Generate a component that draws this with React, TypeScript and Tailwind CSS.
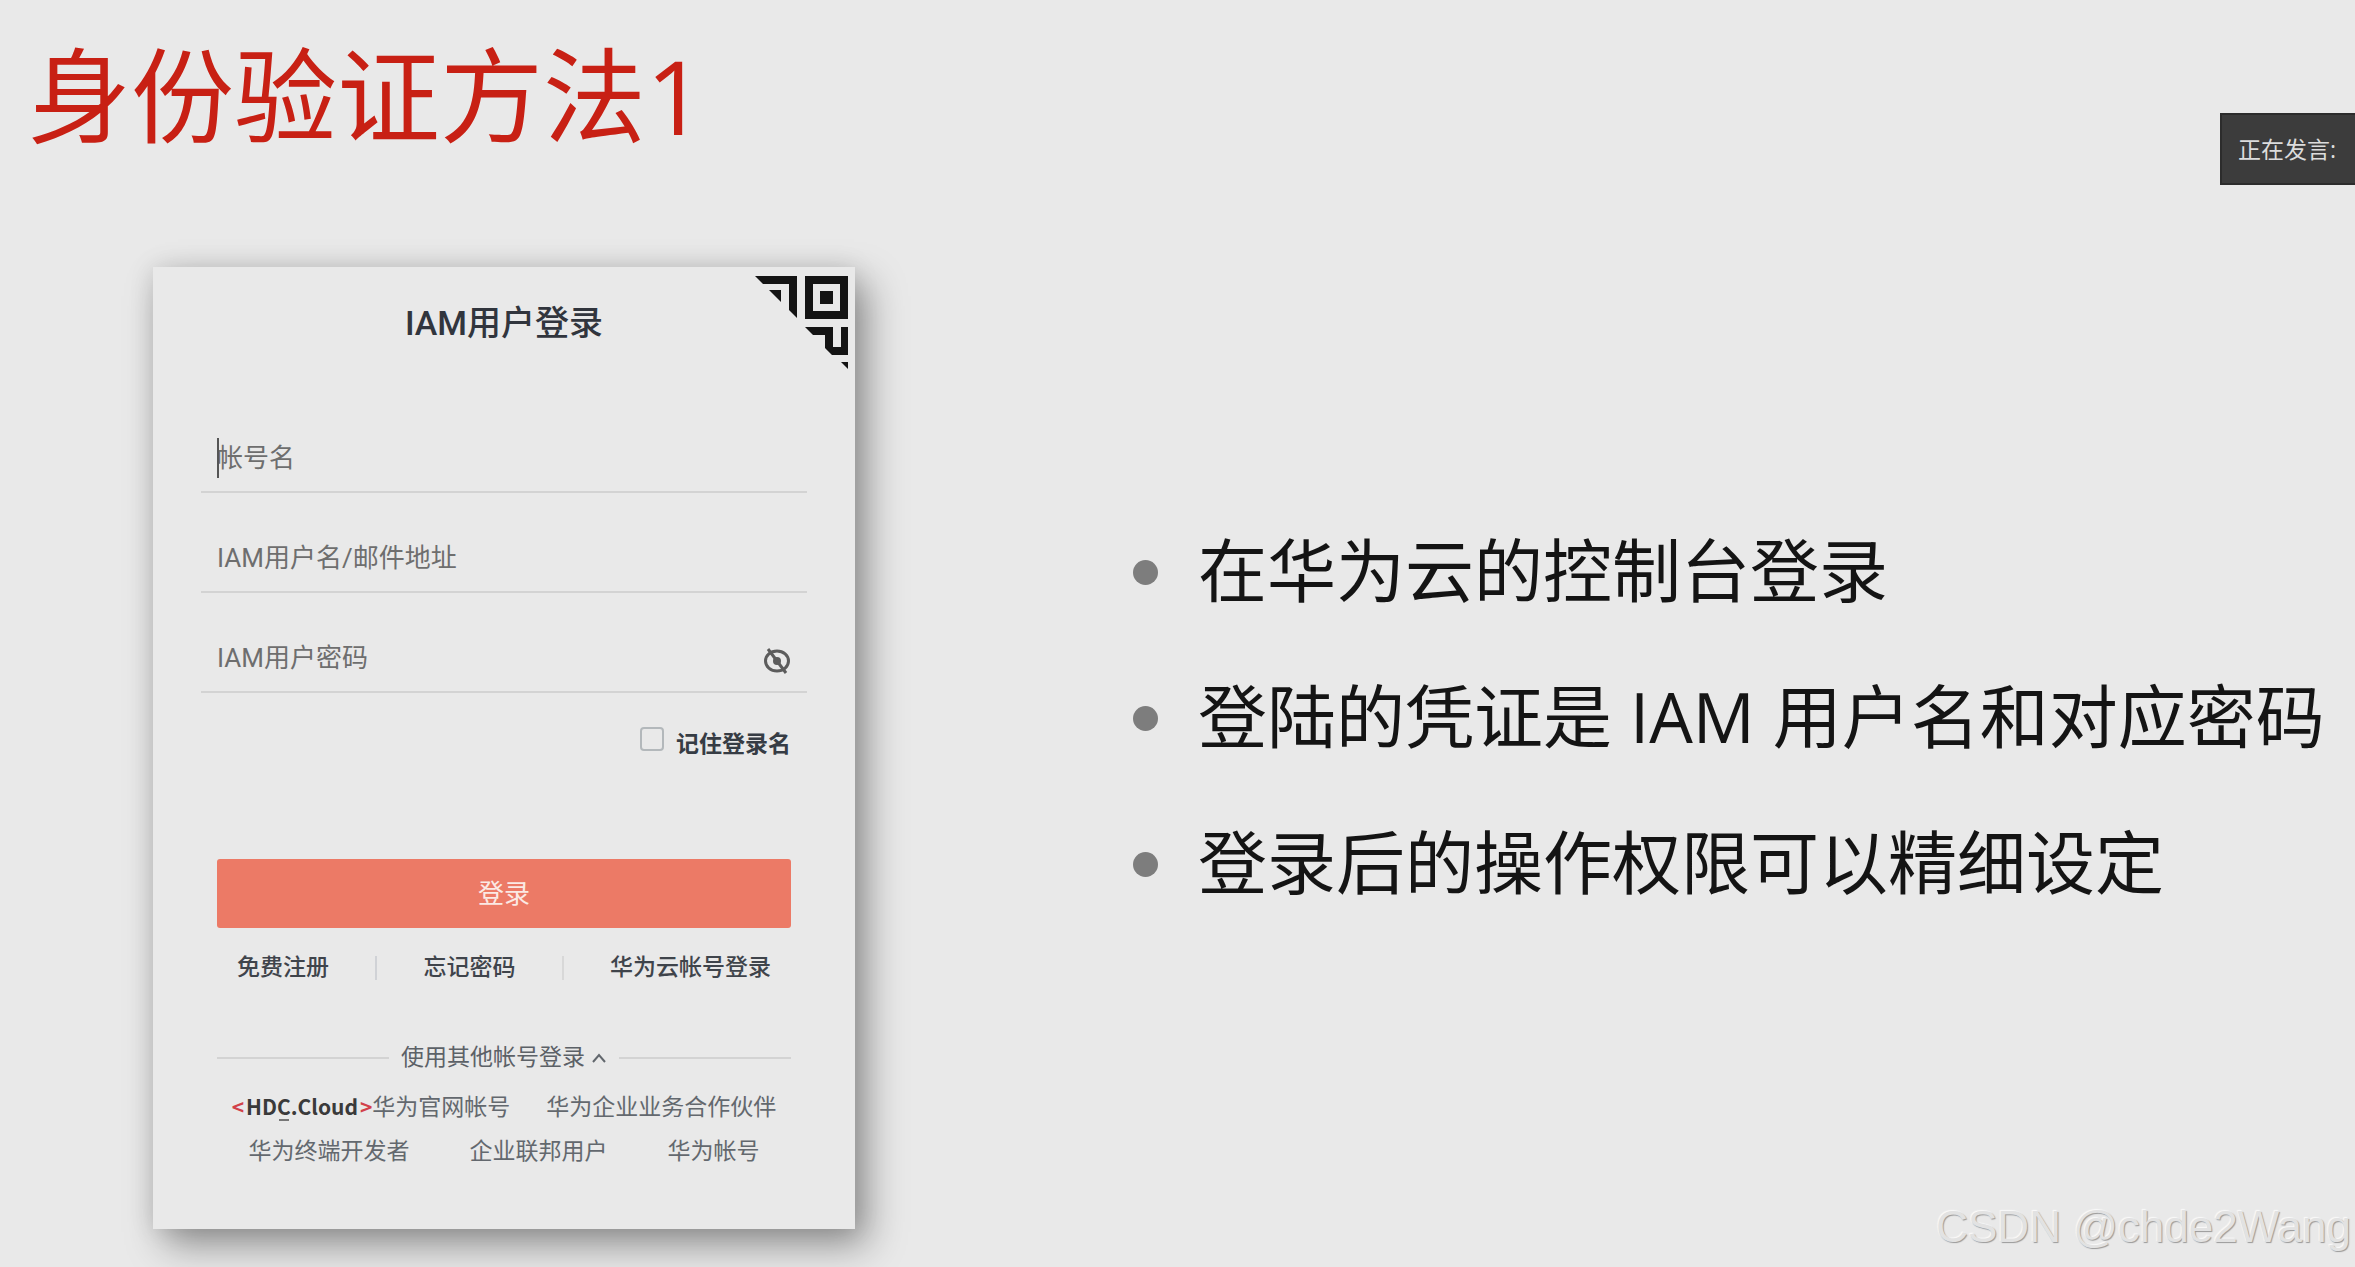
import { useEffect, useRef } from "react";

const points = [
  "在华为云的控制台登录",
  "登陆的凭证是 IAM 用户名和对应密码",
  "登录后的操作权限可以精细设定",
];

function QrCorner() {
  return (
    <svg
      viewBox="0 0 93 93"
      className="absolute top-[9px] right-[7px] h-[93px] w-[93px]"
      fill="#141414"
      aria-hidden="true"
    >
      <path d="M0 0H42V42L34 34V8H8Z" />
      <path d="M14 14H26V26Z" />
      <path fillRule="evenodd" d="M50 0H93V43H50ZM58 8V35H85V8Z" />
      <path d="M65 15H78V28H65Z" />
      <path d="M50 51H78V71H86V51H93V79H77L70 72V59H58Z" />
      <path d="M86 86H93V93Z" />
    </svg>
  );
}

function EyeOff() {
  return (
    <svg viewBox="0 0 28 28" className="h-7 w-7" fill="none" stroke="#5c5c5c" strokeWidth="3" aria-hidden="true">
      <ellipse cx="14" cy="14" rx="11.5" ry="10" />
      <circle cx="14" cy="14" r="4" fill="#5c5c5c" stroke="none" />
      <path d="M5 2L23 26" />
    </svg>
  );
}

function Field({
  label,
  type = "text",
  focused = false,
}: {
  label: string;
  type?: string;
  focused?: boolean;
}) {
  const ref = useRef<HTMLInputElement>(null);
  useEffect(() => {
    if (focused) ref.current?.focus({ preventScroll: true });
  }, [focused]);
  return (
    <div className="relative flex h-[100px] items-center border-b-2 border-[#d3d3d3] px-4 pt-8">
      {focused && <span className="absolute left-4 h-10 w-0.5 bg-[#555]" />}
      <input
        ref={ref}
        type={type}
        aria-label={label}
        placeholder={label}
        className="h-12 min-w-0 flex-1 bg-transparent text-[26px] leading-[48px] text-[#444] caret-transparent outline-none placeholder:text-[#6e6e6e]"
      />
      {type === "password" && (
        <button type="button" aria-label="显示密码" className="mt-1.5">
          <EyeOff />
        </button>
      )}
    </div>
  );
}

function LoginCard() {
  return (
    <form
      className="relative w-[702px] max-w-full bg-[#e9e9e9] px-12 pb-[57px] font-['Roboto','Noto_Sans_CJK_SC',sans-serif] shadow-[12px_16px_36px_0px_rgba(0,0,0,0.38),0px_0px_24px_0px_rgba(0,0,0,0.1)]"
      onSubmit={(e) => e.preventDefault()}
    >
      <QrCorner />
      <h2 className="pt-8 text-center text-[34px] leading-[48px] font-medium text-[#31353d]">IAM用户登录</h2>
      <div className="mt-[46px]">
        <Field label="帐号名" focused />
        <Field label="IAM用户名/邮件地址" />
        <Field label="IAM用户密码" type="password" />
      </div>
      <div className="px-4">
        <label className="mt-8 flex items-center justify-end gap-3 text-[23px] leading-10 font-bold text-[#363c44]">
          <input
            type="checkbox"
            className="mb-3 h-6 w-6 appearance-none rounded-sm border-2 border-[#b3b8bb]"
          />
          记住登录名
        </label>
        <button
          type="submit"
          className="mt-[94px] h-[69px] w-full rounded-[3px] bg-[#ec7a66] pt-0.5 text-[26px] text-[#fbe9e4]"
        >
          登录
        </button>
        <nav className="mt-5 flex items-center justify-between px-5 text-[23px] leading-10 font-medium text-[#3f444b]">
          <a href="#register">免费注册</a>
          <span className="h-6 w-0.5 bg-[#d0d2d6]" />
          <a href="#forgot">忘记密码</a>
          <span className="h-6 w-0.5 bg-[#d8d8d8]" />
          <a href="#account-login">华为云帐号登录</a>
        </nav>
        <div className="mt-[50px] flex items-center text-[23px] leading-10 text-[#5c6167]">
          <span className="h-0.5 flex-1 bg-[#d3d3d3]" />
          <button type="button" className="mx-3 flex items-center gap-1.5">
            使用其他帐号登录
            <svg viewBox="0 0 16 10" className="h-2.5 w-4" fill="none" stroke="#62676d" strokeWidth="2" aria-hidden="true">
              <path d="M2 9L8 2L14 9" />
            </svg>
          </button>
          <span className="h-0.5 flex-1 bg-[#d3d3d3]" />
        </div>
        <div className="mt-2.5 flex items-start justify-center text-[23px] leading-10 text-[#63686e]">
          <a
            href="#hdc"
            className="flex gap-0.5 font-['Noto_Sans_CJK_SC',sans-serif] text-[21px] leading-9 font-bold text-[#3a3a3a]"
          >
            <span className="text-[#d2414a]">&lt;</span>
            <span>
              HD
              <span className="relative">
                C<span className="absolute bottom-0 left-0.5 h-0.5 w-2.5 bg-[#777]" />
              </span>
              .Cloud
            </span>
            <span className="text-[#d2414a]">&gt;</span>
          </a>
          <a href="#official">华为官网帐号</a>
          <a href="#partner" className="ml-9">
            华为企业业务合作伙伴
          </a>
        </div>
        <div className="mt-1 flex items-center justify-center gap-[60px] text-[23px] leading-10 text-[#63686e]">
          <a href="#developer">华为终端开发者</a>
          <a href="#federated">企业联邦用户</a>
          <a href="#huawei-id">华为帐号</a>
        </div>
      </div>
    </form>
  );
}

export default function App() {
  return (
    <main className="relative min-h-screen overflow-hidden bg-[#e9e9e9] font-['Open_Sans','Noto_Sans_CJK_SC',sans-serif]">
      <h1 className="pt-5 pl-7 text-[103px] leading-[150px] text-[#c82014]">身份验证方法1</h1>
      <div className="mt-[97px] flex items-start pl-[153px]">
        <LoginCard />
        <ul className="mt-[230px] ml-[278px] flex flex-col text-[69px] leading-[146px] whitespace-nowrap text-[#141414]">
          {points.map((text) => (
            <li key={text} className="flex items-center gap-10">
              <span className="mt-1 h-[25px] w-[25px] shrink-0 rounded-full bg-[#7d7d7d]" />
              {text}
            </li>
          ))}
        </ul>
      </div>
      <div className="absolute top-[113px] right-0 flex h-[72px] w-[135px] items-center border-2 border-r-0 border-[#2c2c2c] bg-[#3c3c3c] pl-4 text-[23px] whitespace-nowrap text-[#dcdcdc]">
        正在发言:
      </div>
      <p className="absolute right-1 bottom-3.5 font-['Liberation_Sans',sans-serif] text-[44px] leading-[52px] text-[#e2e2e2] [text-shadow:1px_1px_1px_#999,-1px_-1px_1px_#fafafa]">
        CSDN @chde2Wang
      </p>
    </main>
  );
}
